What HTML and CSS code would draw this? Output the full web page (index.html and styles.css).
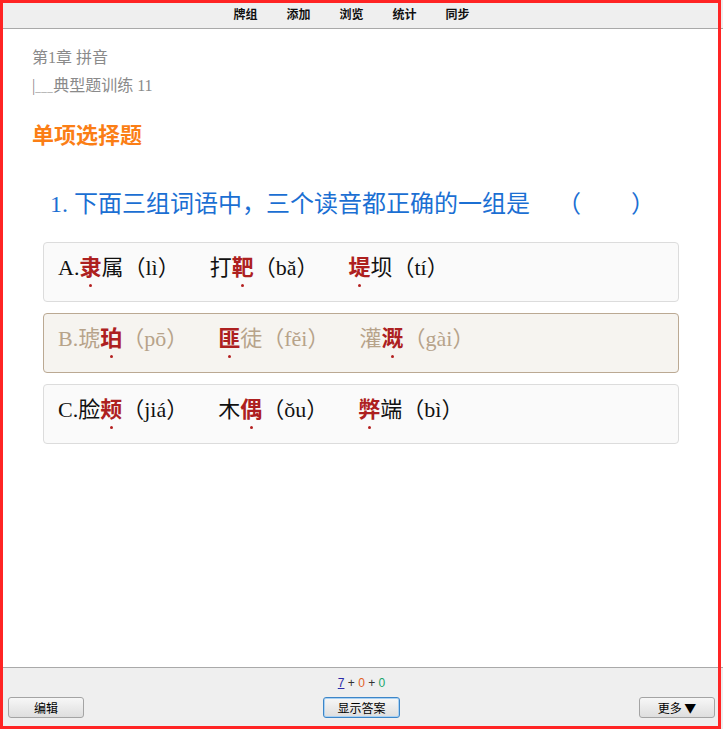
FILE: index.html
```html
<!DOCTYPE html>
<html lang="zh">
<head>
<meta charset="utf-8">
<title>典型题训练</title>
<link rel="stylesheet" href="styles.css">
</head>
<body>
<div class="app">
  <div class="toolbar">
    <span class="nav-item">牌组</span>
    <span class="nav-item">添加</span>
    <span class="nav-item">浏览</span>
    <span class="nav-item">统计</span>
    <span class="nav-item">同步</span>
  </div>
  <div class="main">
    <div class="crumb">第1章 拼音</div>
    <div class="crumb">|<span class="dash">___</span>典型题训练 11</div>
    <div class="section">单项选择题</div>
    <div class="question"><span class="num">1.</span> 下面三组词语中，三个读音都正确的一组是<span class="blank">（<span class="gap"></span>）</span></div>
    <div class="options">
      <div class="option">
        <span class="label">A.</span><span class="item"><b class="em">隶</b>属（lì）</span><span class="item">打<b class="em">靶</b>（bǎ）</span><span class="item"><b class="em">堤</b>坝（tí）</span>
      </div>
      <div class="option selected">
        <span class="label">B.</span><span class="item">琥<b class="em">珀</b>（pō）</span><span class="item"><b class="em">匪</b>徒（fěi）</span><span class="item">灌<b class="em">溉</b>（gài）</span>
      </div>
      <div class="option">
        <span class="label">C.</span><span class="item">脸<b class="em">颊</b>（jiá）</span><span class="item">木<b class="em">偶</b>（ǒu）</span><span class="item"><b class="em">弊</b>端（bì）</span>
      </div>
    </div>
  </div>
  <div class="footer">
    <div class="counter"><span class="c-new">7</span> + <span class="c-learn">0</span> + <span class="c-due">0</span></div>
    <div class="buttons">
      <button class="btn">编辑</button>
      <button class="btn primary">显示答案</button>
      <button class="btn">更多 ▼</button>
    </div>
  </div>
</div>
<div class="frame"></div>
</body>
</html>
```

FILE: styles.css
```css
html, body {
  margin: 0;
  padding: 0;
  background: #ffffff;
}

.app {
  width: 723px;
  height: 729px;
  display: flex;
  flex-direction: column;
  font-family: "Liberation Serif", "Noto Sans CJK SC", serif;
}

.toolbar {
  height: 28px;
  background: #efefef;
  border-bottom: 1px solid #a9a9a9;
  display: flex;
  justify-content: center;
  align-items: center;
  gap: 28px;
  padding-right: 20px;
  box-sizing: content-box;
}

.nav-item {
  font-family: "Noto Sans CJK SC", sans-serif;
  font-size: 12px;
  font-weight: 700;
  color: #111;
  line-height: 14px;
  width: 25px;
  text-align: center;
}

.main {
  flex: 1;
  padding: 15px 44px 0 32px;
  overflow: hidden;
}

.crumb {
  font-size: 16px;
  line-height: 28px;
  color: #8a8a8a;
}

.dash {
  font-size: 11px;
  letter-spacing: 0.5px;
}

.section {
  margin-top: 18px;
  font-family: "Noto Sans CJK SC", sans-serif;
  font-size: 22px;
  font-weight: 700;
  line-height: 28px;
  color: #fb7e15;
}

.question {
  margin-top: 39px;
  margin-left: 18px;
  font-size: 24px;
  line-height: 32px;
  color: #1b6fd3;
  white-space: nowrap;
}

.question .num {
  font-family: "Liberation Serif", serif;
}

.blank {
  margin-left: 27px;
  font-family: "Noto Sans CJK SC", sans-serif;
}

.gap {
  display: inline-block;
  width: 50px;
}

.options {
  margin-top: 22px;
  margin-left: 11px;
  display: flex;
  flex-direction: column;
  gap: 11px;
}

.option {
  height: 60px;
  box-sizing: border-box;
  padding: 9px 14px 0;
  border: 1px solid #dcdcdc;
  border-radius: 4px;
  background: #fafafa;
  font-size: 22px;
  line-height: 32px;
  color: #111;
  white-space: nowrap;
}

.option.selected {
  background: #f6f4f0;
  border-color: #bba993;
  color: #b7a38a;
}

.item {
  margin-right: 30px;
}

.em {
  position: relative;
  font-weight: 700;
  color: #ad2020;
}

.em::after {
  content: "";
  position: absolute;
  left: 50%;
  top: calc(50% + 16px);
  width: 3px;
  height: 3px;
  margin-left: -1.5px;
  border-radius: 50%;
  background: #b42020;
}

.footer {
  height: 61px;
  background: #efefef;
  border-top: 1px solid #a9a9a9;
  display: flex;
  flex-direction: column;
  font-family: "Liberation Sans", "Noto Sans CJK SC", sans-serif;
}

.counter {
  margin-top: 8px;
  font-size: 12px;
  line-height: 14px;
  color: #333;
  text-align: center;
}

.c-new {
  color: #2b2ba8;
  text-decoration: underline;
}

.c-learn {
  color: #e2601f;
}

.c-due {
  color: #17a66a;
}

.buttons {
  margin-top: 7px;
  padding: 0 8px;
  display: flex;
  justify-content: space-between;
}

.btn {
  width: 76px;
  height: 21px;
  padding: 0;
  border: 1px solid #a4a4a4;
  border-radius: 3px;
  background: linear-gradient(#f7f7f7, #dedede);
  font-family: "Noto Sans CJK SC", sans-serif;
  font-size: 12px;
  line-height: 18px;
  color: #000;
}

.btn.primary {
  width: 77px;
  border-color: #3d86c8;
  box-shadow: inset 0 0 0 1px #a9d1f3;
}

.frame {
  position: absolute;
  left: 0;
  top: 0;
  width: 721px;
  height: 729px;
  box-sizing: border-box;
  border: 3px solid #ff2424;
  pointer-events: none;
}
```
